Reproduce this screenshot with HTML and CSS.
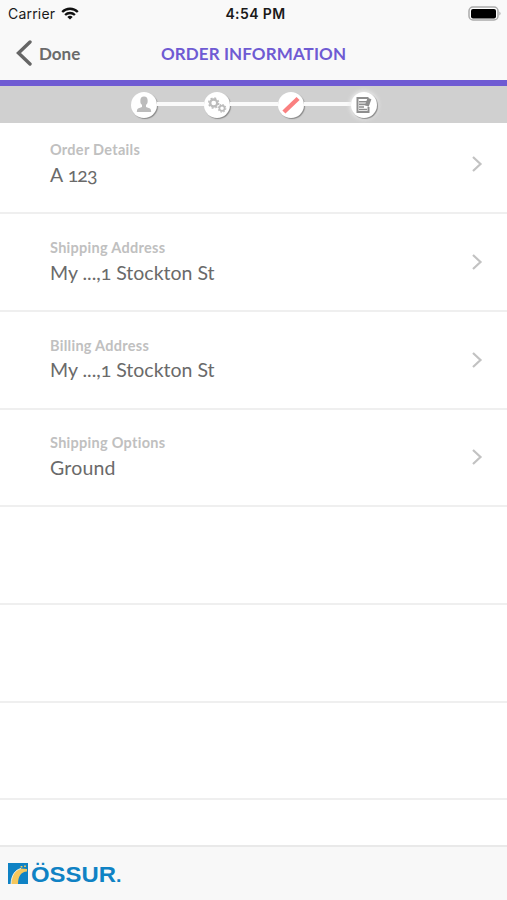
FILE: index.html
```html
<!DOCTYPE html>
<html lang="en">
<head>
<meta charset="utf-8">
<meta name="viewport" content="width=device-width, initial-scale=1">
<title>Order Information</title>
<link rel="stylesheet" href="styles.css">
</head>
<body>
<div class="screen">
  <header class="top">
    <div class="status">
      <div class="carrier"><span>Carrier</span>
        <svg width="18" height="13" viewBox="0 0 18 13" fill="none" stroke="#111" stroke-width="2.3"><path d="M1.2 5A11 11 0 0 1 16.8 5M4.1 8A7 7 0 0 1 13.9 8"/><path d="M9 12.6L6.3 10A3.8 3.8 0 0 1 11.7 10Z" fill="#111" stroke="none"/></svg>
      </div>
      <span class="time">4:54 PM</span>
      <svg class="battery" width="34" height="16" viewBox="0 0 34 16"><rect x="1" y="1" width="29" height="13" rx="4" fill="#fff" stroke="#aaa" stroke-width="1.5"/><rect x="3" y="3" width="25" height="9.5" rx="2" fill="#000"/><path d="M31.5 5.5q2 2 0 4z" fill="#999"/></svg>
    </div>
    <nav class="nav">
      <div class="back">
        <svg width="16" height="26" viewBox="0 0 16 26" fill="none" stroke="#666" stroke-width="3.4" stroke-linecap="round"><path d="M14 2L2.5 13L14 24"/></svg>
        <span class="done">Done</span>
      </div>
      <h1 class="title">ORDER INFORMATION</h1>
      <span></span>
    </nav>
  </header>
  <div class="steps">
    <span class="step"><svg width="26" height="26" viewBox="0 0 26 26" fill="#bcbcbc"><ellipse cx="13" cy="8.9" rx="3.7" ry="4.4"/><path d="M11 11h4v4l4 1.6q1.2.6 1.2 3.4H5.8q0-2.8 1.2-3.4L11 15z"/></svg></span>
    <i class="link"></i>
    <span class="step"><svg width="26" height="26" viewBox="0 0 26 26" fill="none" stroke="#bcbcbc"><circle cx="9.7" cy="11" r="3.5" stroke-width="2.3"/><circle cx="9.7" cy="11" r="5" stroke-width="1.4" stroke-dasharray="2 1.93"/><circle cx="18" cy="16.3" r="2.6" stroke-width="1.7"/><circle cx="18" cy="16.3" r="3.8" stroke-width="1.1" stroke-dasharray="1.5 1.48"/></svg></span>
    <i class="link"></i>
    <span class="step"><svg width="26" height="26" viewBox="0 0 26 26"><path d="M7.5 18.5L18.5 8" stroke="#fa8080" stroke-width="4.4" stroke-linecap="square"/></svg></span>
    <i class="link"></i>
    <span class="step glow"><svg width="26" height="26" viewBox="0 0 26 26" fill="none" stroke="#8e8e8e" stroke-width="2"><path d="M17.5 6H6.5v14h11v-5"/><path d="M8 9.700h8M8 12.400h7M8 15h5M8 17.500h8" stroke-width="1.6"/><path d="M18.500 6.500L15.800 14" stroke-width="4"/></svg></span>
  </div>
  <main class="list">
    <section class="row first"><div><div class="label">Order Details</div><div class="value v1">A 123</div></div><svg class="chev" width="12" height="18" viewBox="0 0 12 18"><path d="M2 2L9.5 9L2 16"/></svg></section>
    <section class="row"><div><div class="label">Shipping Address</div><div class="value">My ...,1 Stockton St</div></div><svg class="chev" width="12" height="18" viewBox="0 0 12 18"><path d="M2 2L9.5 9L2 16"/></svg></section>
    <section class="row"><div><div class="label">Billing Address</div><div class="value">My ...,1 Stockton St</div></div><svg class="chev" width="12" height="18" viewBox="0 0 12 18"><path d="M2 2L9.5 9L2 16"/></svg></section>
    <section class="row"><div><div class="label">Shipping Options</div><div class="value v4">Ground</div></div><svg class="chev" width="12" height="18" viewBox="0 0 12 18"><path d="M2 2L9.5 9L2 16"/></svg></section>
    <section class="row"></section>
    <section class="row"></section>
    <section class="row"></section>
  </main>
  <footer class="footer">
    <svg width="20" height="21" viewBox="0 0 20 21"><rect width="20" height="21" fill="#0f82c4"/><path d="M3 21C3.5 12 7 7 13 5.5L19 6V8.5C13 9 10 13 10 21z" fill="#f5c75d"/><path d="M3 21C3.5 12 7 7 13 5.5" fill="none" stroke="#fff" stroke-width=".8"/><path d="M13.5 3v1.5M17 2.5V4" stroke="#f5c75d" stroke-width="1.8"/></svg>
    <span class="brand">ÖSSUR<span class="dot">.</span></span>
  </footer>
</div>
</body>
</html>
```
FILE: styles.css
```css
* { box-sizing: border-box; }
body { margin: 0; background: #fff; font-family: Lato, sans-serif; }
.screen { width: 507px; height: 900px; display: flex; flex-direction: column; overflow: hidden; }
.top { height: 86px; flex: none; background: #f9f9f9; border-bottom: 6px solid #6f5bd3; }
.status { height: 27px; display: grid; grid-template-columns: 1fr auto 1fr; align-items: center; padding: 0 5px 0 8px; font: 14px/27px Inter, sans-serif; color: #1a1a1a; }
.carrier { display: flex; align-items: center; gap: 6px; letter-spacing: .2px; }
.time { font-weight: 600; letter-spacing: .4px; margin-left: 1px; }
.battery { justify-self: end; }
.nav { height: 53px; display: grid; grid-template-columns: 1fr auto 1fr; align-items: center; padding: 0 16px; }
.back { display: flex; align-items: center; gap: 7px; margin-top: -1px; }
.done { font-size: 17px; font-weight: 700; color: #6b6b6b; padding-top: 1px; }
.title { margin: 0; font-size: 17px; font-weight: 700; color: #6f5bd3; letter-spacing: .1px; }
.steps { height: 37px; flex: none; background: #d0d0d0; display: flex; align-items: center; justify-content: center; padding-left: 1px; }
.step { width: 26px; height: 26px; border-radius: 50%; background: #fff; box-shadow: 1px 1px 1px #8a8a8a; }
.step svg { display: block; }
.glow { box-shadow: 1px 1px 1px #8a8a8a, 0 0 4px 1px #eee; }
.link { width: 47.3px; height: 4px; background: #fafafa; margin-top: -2px; }
.list { flex: 1; overflow: hidden; }
.row { height: 97.7px; border-bottom: 2px solid #efefef; display: flex; justify-content: space-between; align-items: flex-start; padding: 22.8px 24px 0 50px; }
.first { height: 91.2px; padding-top: 16px; }
.label { font-size: 14.5px; line-height: 22px; font-weight: 700; color: #c0c0c0; white-space: nowrap; letter-spacing: .28px; }
.value { margin-top: -.3px; font-size: 19.5px; line-height: 28px; color: #6a6a6a; white-space: nowrap; font-variant-numeric: oldstyle-nums; }
.v1 { letter-spacing: -.9px; word-spacing: 2px; }
.v4 { letter-spacing: .2px; }
.chev { margin-top: 16px; fill: none; stroke: #c2c2c2; stroke-width: 2.2; }
.footer { height: 55px; flex: none; background: #f8f8f8; border-top: 2px solid #e9e9e9; display: flex; align-items: center; padding: 0 0 0 8px; gap: 3px; }
.brand { font: bold 22px/28px "Liberation Sans", sans-serif; color: #0f82c4; transform: scaleX(1.085); transform-origin: left; padding-top: 4px; }
.dot { font-size: 18px; }
```
